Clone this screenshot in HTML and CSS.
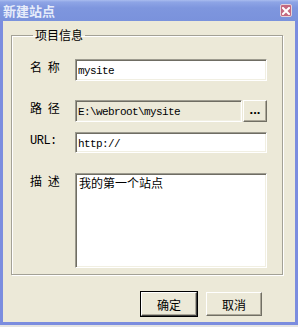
FILE: index.html
```html
<!DOCTYPE html>
<html>
<head>
  <meta charset="utf-8">
  <title>新建站点</title>
  <link rel="stylesheet" href="styles.css">
</head>
<body>
  <div class="window">
    <div class="titlebar">
      <span class="title">新建站点</span>
      <span class="close-btn">
        <svg width="8" height="8" viewBox="0 0 8 8">
          <path d="M1 1 L7 7 M7 1 L1 7" stroke="#fff" stroke-width="2" stroke-linecap="square"/>
        </svg>
      </span>
    </div>

    <div class="client">
      <fieldset class="group">
        <legend>项目信息</legend>

        <div class="row row-name">
          <label>名 称</label>
          <input class="field" type="text" value="mysite">
        </div>

        <div class="row row-path">
          <label>路 径</label>
          <div class="path-box">
            <input class="field readonly" type="text" value="E:\webroot\mysite" readonly>
            <button class="browse-btn">...</button>
          </div>
        </div>

        <div class="row row-url">
          <label class="latin">URL:</label>
          <input class="field" type="text" value="http://">
        </div>

        <div class="row row-desc">
          <label>描 述</label>
          <textarea class="field memo">我的第一个站点</textarea>
        </div>
      </fieldset>

      <div class="actions">
        <button class="btn default">确定</button>
        <button class="btn">取消</button>
      </div>
    </div>
  </div>
</body>
</html>
```

FILE: styles.css
```css
body {
  margin: 0;
  background-color: #e4e4e4;
  font-family: "Noto Sans CJK SC", "DejaVu Sans", sans-serif;
  font-size: 12px;
  color: #000;
}
.window {
  width: 298px;
  height: 325px;
  display: flex;
  flex-direction: column;
}
.titlebar {
  height: 21px;
  display: flex;
  align-items: center;
  justify-content: space-between;
  padding: 0 6px 0 3px;
  background: linear-gradient(#a9bcef 0, #8ea5e6 2px, #7e96de 8px, #7a92dc 100%);
}
.title {
  color: #e6ecfa;
  font-weight: bold;
  font-size: 13px;
  line-height: 15px;
}
.close-btn {
  width: 10px;
  height: 11px;
  border: 1px solid #e4d2da;
  border-radius: 2px;
  background-color: #c3687f;
  display: flex;
  align-items: center;
  justify-content: center;
}
.client {
  flex: 1;
  background-color: #ece9d8;
  border: 3px solid #7b8ddf;
  border-top: 0;
  display: flex;
  flex-direction: column;
}
.group {
  margin: 7px 12px 0 8px;
  padding: 0 15px 6px 18px;
  border: 1px solid #a3a196;
  box-shadow: inset 1px 1px #fff, 1px 1px #fff;
}
.group legend {
  padding: 0 2px;
  margin-left: 3px;
  line-height: 14px;
}
.row {
  display: grid;
  grid-template-columns: 45px 1fr;
  align-items: start;
}
.row label {
  line-height: 14px;
  padding-top: 1px;
  word-spacing: 3px;
}
.row label.latin {
  font-family: "Liberation Mono", monospace;
  font-size: 12px;
  letter-spacing: -0.5px;
  padding-top: 2px;
}
.row-name { margin-top: 17px; }
.row-path { margin-top: 19px; }
.row-url { margin-top: 10px; }
.row-desc { margin-top: 20px; }
.field {
  box-sizing: border-box;
  width: 100%;
  height: 22px;
  margin: 0;
  padding: 2px 2px 0;
  border: 1px solid;
  border-color: #9d9b8f #fff #fff #9d9b8f;
  box-shadow: inset 1px 1px #6f6d63, inset -1px -1px #f1efe2;
  background-color: #fff;
  font-family: "Liberation Mono", monospace;
  font-size: 11px;
  letter-spacing: -0.6px;
  color: #000;
  outline: none;
}
.readonly {
  background-color: #ece9d8;
}
.path-box {
  display: flex;
  gap: 1px;
}
.browse-btn {
  flex: none;
  width: 24px;
  height: 22px;
  margin: 0;
  padding: 0 0 4px;
  border: 1px solid;
  border-color: #fff #716f64 #716f64 #fff;
  box-shadow: inset -1px -1px #aca899;
  background-color: #ece9d8;
  font-family: "Liberation Sans", sans-serif;
  font-weight: bold;
  font-size: 13px;
  letter-spacing: 0;
}
.row-url .field {
  height: 21px;
}
.memo {
  height: 95px;
  resize: none;
  padding: 2px 3px;
  font-family: "Noto Sans CJK SC", sans-serif;
  font-size: 12px;
  line-height: 14px;
  letter-spacing: 0;
}
.actions {
  display: flex;
  justify-content: flex-end;
  gap: 9px;
  margin-top: 17px;
  padding-right: 33px;
}
.btn {
  box-sizing: border-box;
  width: 56px;
  height: 24px;
  margin: 0;
  padding: 0;
  border: 1px solid;
  border-color: #fff #716f64 #716f64 #fff;
  box-shadow: inset -1px -1px #aca899;
  background-color: #ece9d8;
  font-family: "Noto Sans CJK SC", sans-serif;
  font-size: 12px;
  color: #000;
}
.btn.default {
  outline: 1px solid #000;
  outline-offset: 0;
  border-color: #fff #404040 #404040 #fff;
}
```
